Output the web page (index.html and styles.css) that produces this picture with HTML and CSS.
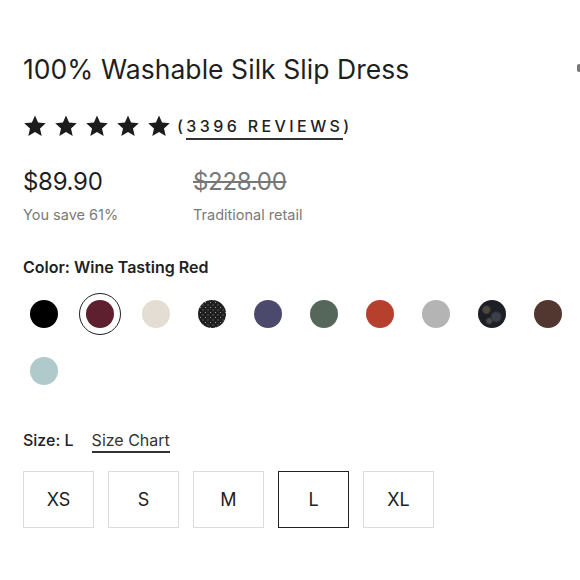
FILE: index.html
```html
<!DOCTYPE html>
<html>
<head>
<meta charset="utf-8">
<link rel="stylesheet" href="styles.css">
</head>
<body>
<div class="product">
  <h1 class="title">100% Washable Silk Slip Dress</h1>
  <span class="edge-mark"></span>
  <div class="rating">
    <div class="stars">
      <svg viewBox="0 0 24 24" class="star"><path d="M12 1.5l3.1 7.1 7.7.7-5.8 5.1 1.7 7.6L12 18l-6.7 4 1.7-7.6-5.8-5.1 7.7-.7z"/></svg>
      <svg viewBox="0 0 24 24" class="star"><path d="M12 1.5l3.1 7.1 7.7.7-5.8 5.1 1.7 7.6L12 18l-6.7 4 1.7-7.6-5.8-5.1 7.7-.7z"/></svg>
      <svg viewBox="0 0 24 24" class="star"><path d="M12 1.5l3.1 7.1 7.7.7-5.8 5.1 1.7 7.6L12 18l-6.7 4 1.7-7.6-5.8-5.1 7.7-.7z"/></svg>
      <svg viewBox="0 0 24 24" class="star"><path d="M12 1.5l3.1 7.1 7.7.7-5.8 5.1 1.7 7.6L12 18l-6.7 4 1.7-7.6-5.8-5.1 7.7-.7z"/></svg>
      <svg viewBox="0 0 24 24" class="star"><path d="M12 1.5l3.1 7.1 7.7.7-5.8 5.1 1.7 7.6L12 18l-6.7 4 1.7-7.6-5.8-5.1 7.7-.7z"/></svg>
    </div>
    <span class="reviews">(<span class="reviews-link">3396 REVIEWS</span>)</span>
  </div>
  <div class="prices">
    <div class="price-col">
      <div class="price">$89.90</div>
      <div class="price-note">You save 61%</div>
    </div>
    <div class="price-col">
      <div class="price old">$228.00</div>
      <div class="price-note">Traditional retail</div>
    </div>
  </div>
  <div class="label">Color: Wine Tasting Red</div>
  <div class="swatches">
    <div class="swatch"><span class="dot c-black"></span></div>
    <div class="swatch selected"><span class="dot c-wine"></span></div>
    <div class="swatch"><span class="dot c-cream"></span></div>
    <div class="swatch"><span class="dot c-dots"></span></div>
    <div class="swatch"><span class="dot c-navy"></span></div>
    <div class="swatch"><span class="dot c-green"></span></div>
    <div class="swatch"><span class="dot c-red"></span></div>
    <div class="swatch"><span class="dot c-gray"></span></div>
    <div class="swatch"><span class="dot c-floral"></span></div>
    <div class="swatch"><span class="dot c-brown"></span></div>
    <div class="swatch"><span class="dot c-sky"></span></div>
  </div>
  <div class="size-head">
    <span class="label inline">Size: L</span>
    <span class="size-chart">Size Chart</span>
  </div>
  <div class="sizes">
    <div class="size">XS</div>
    <div class="size">S</div>
    <div class="size">M</div>
    <div class="size active">L</div>
    <div class="size">XL</div>
  </div>
</div>
</body>
</html>
```
FILE: styles.css
```css
html, body {
  margin: 0;
  padding: 0;
  background: #fff;
}
body {
  font-family: Inter, "Liberation Sans", Arial, sans-serif;
  color: #222;
  width: 580px;
  height: 580px;
  overflow: hidden;
}
.product {
  position: relative;
  padding: 53px 0 0 23px;
}
.title {
  margin: 0;
  font-size: 26.5px;
  font-weight: 400;
  line-height: 32px;
  letter-spacing: 0.05px;
  color: #1f1f1f;
}
.edge-mark {
  position: absolute;
  left: 577px;
  top: 64px;
  width: 4px;
  height: 8px;
  border-radius: 2px;
  background: #777;
}
.rating {
  display: flex;
  align-items: center;
  margin-top: 28px;
  height: 26px;
}
.stars {
  display: flex;
  gap: 7px;
}
.star {
  width: 24px;
  height: 24px;
  fill: #1c1c1c;
}
.reviews {
  margin-left: 6px;
  font-size: 16px;
  font-weight: 500;
  letter-spacing: 3.4px;
  color: #222;
}
.reviews-link {
  border-bottom: 2px solid #333;
  padding-bottom: 2px;
}
.prices {
  display: flex;
  margin-top: 28px;
}
.price-col {
  width: 170px;
}
.price {
  font-size: 24px;
  line-height: 30px;
  color: #1f1f1f;
  letter-spacing: -0.3px;
}
.price.old {
  color: #777;
  text-decoration: line-through;
  text-decoration-thickness: 1.5px;
}
.price-note {
  margin-top: 9px;
  font-size: 14.5px;
  color: #7a7a7a;
}
.label {
  margin-top: 34px;
  font-size: 16px;
  font-weight: 600;
  color: #222;
}
.label.inline {
  margin: 0;
  font-weight: 500;
}
.swatches {
  display: flex;
  flex-wrap: wrap;
  gap: 15px 14px;
  margin-top: 16px;
  width: 557px;
}
.swatch {
  width: 42px;
  height: 42px;
  border-radius: 50%;
  display: flex;
  align-items: center;
  justify-content: center;
  box-sizing: border-box;
}
.swatch.selected {
  border: 1.5px solid #222;
}
.dot {
  width: 28px;
  height: 28px;
  border-radius: 50%;
  display: block;
}
.c-black { background: #000; }
.c-wine { background: #5e1f2e; }
.c-cream { background: #e4ddd3; }
.c-dots {
  background-color: #1f1f1f;
  background-image:
    radial-gradient(circle, #9a9a9a 0.5px, transparent 0.9px),
    radial-gradient(circle, #8a8a8a 0.5px, transparent 0.9px);
  background-size: 5px 5px, 5px 5px;
  background-position: 0 0, 2.5px 2.5px;
}
.c-navy { background: #4b4a6c; }
.c-green { background: #55675a; }
.c-red { background: #b6402d; }
.c-gray { background: #b4b4b4; }
.c-floral {
  background: radial-gradient(circle at 30% 35%, #4e463f 0 3px, transparent 5px),
              radial-gradient(circle at 65% 60%, #3c3f48 0 4px, transparent 6px),
              radial-gradient(circle at 40% 75%, #4a484d 0 2px, transparent 4px),
              #1d1f26;
}
.c-brown { background: #523630; }
.c-sky { background: #b0c9cb; }
.size-head {
  display: flex;
  align-items: baseline;
  gap: 18px;
  margin-top: 38px;
  font-size: 16px;
}
.size-chart {
  color: #333;
  border-bottom: 2px solid #333;
  padding-bottom: 1px;
}
.sizes {
  display: flex;
  gap: 14px;
  margin-top: 18px;
}
.size {
  width: 71px;
  height: 57px;
  box-sizing: border-box;
  border: 1.5px solid #dcdcdc;
  display: flex;
  align-items: center;
  justify-content: center;
  font-size: 18px;
  color: #222;
}
.size.active {
  border: 1.5px solid #222;
}
```
